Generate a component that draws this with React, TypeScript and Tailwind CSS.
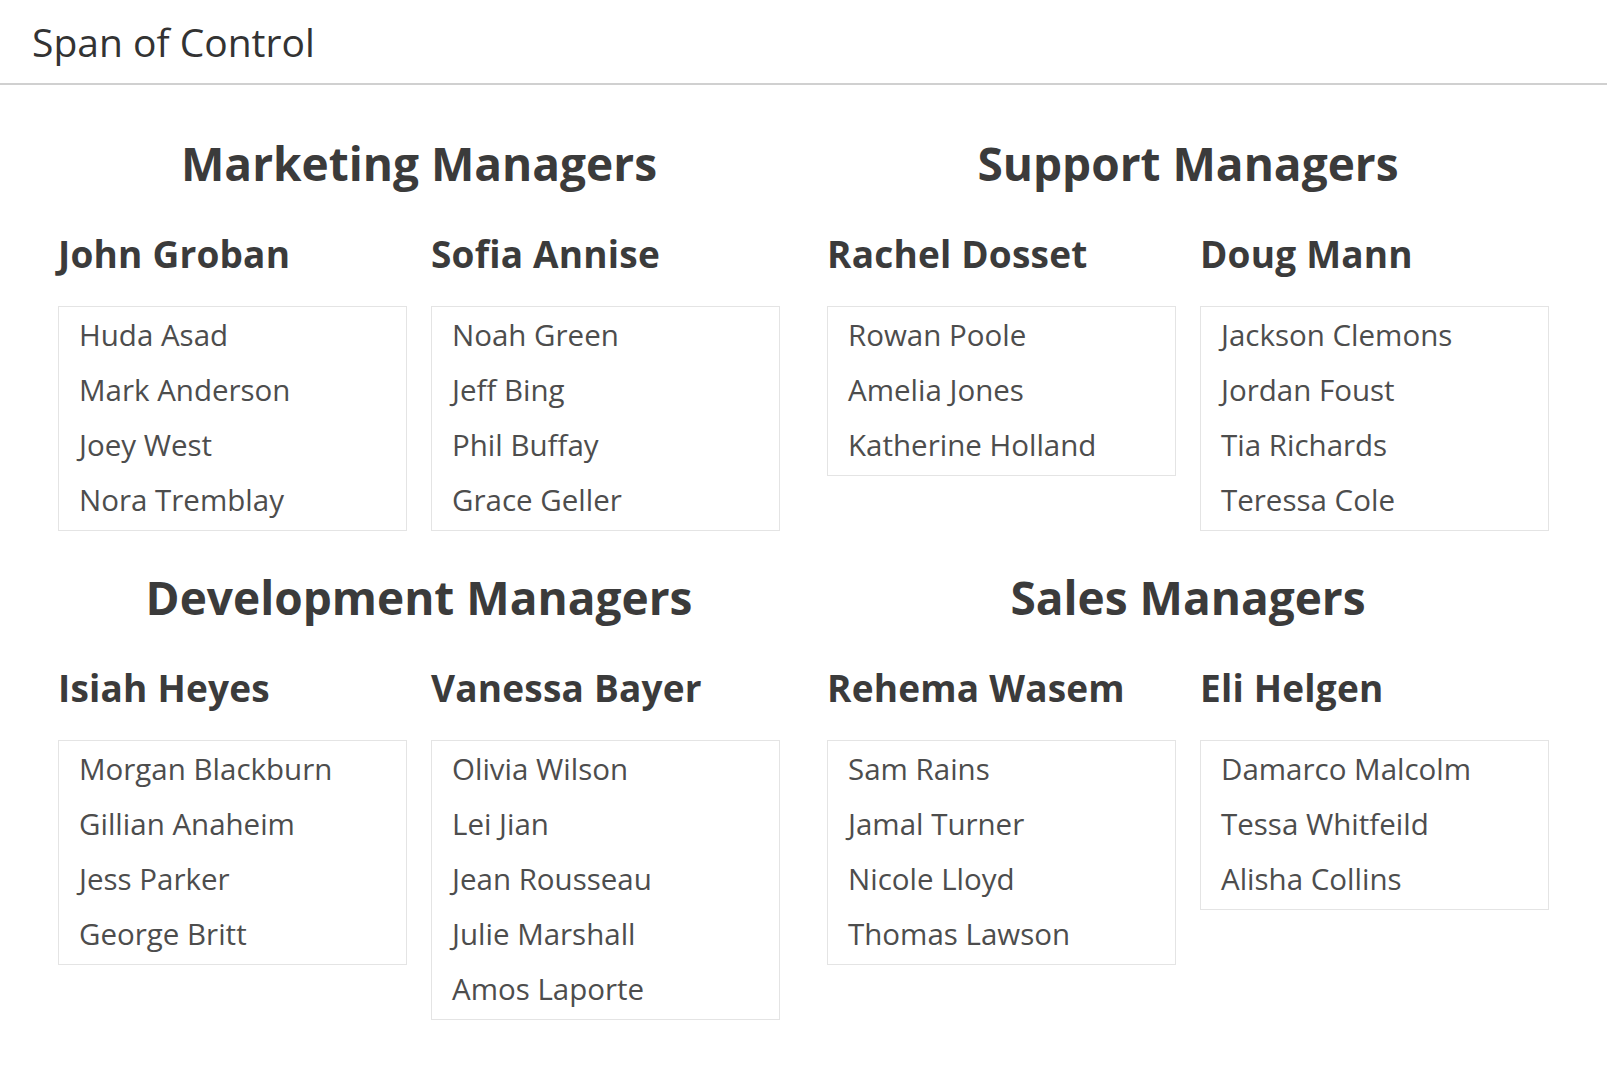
import React from "react";

type Manager = { name: string; reports: string[] };
type Section = { title: string; managers: Manager[] };

const sections: Section[] = [
  {
    title: "Marketing Managers",
    managers: [
      { name: "John Groban", reports: ["Huda Asad", "Mark Anderson", "Joey West", "Nora Tremblay"] },
      { name: "Sofia Annise", reports: ["Noah Green", "Jeff Bing", "Phil Buffay", "Grace Geller"] },
    ],
  },
  {
    title: "Support Managers",
    managers: [
      { name: "Rachel Dosset", reports: ["Rowan Poole", "Amelia Jones", "Katherine Holland"] },
      { name: "Doug Mann", reports: ["Jackson Clemons", "Jordan Foust", "Tia Richards", "Teressa Cole"] },
    ],
  },
  {
    title: "Development Managers",
    managers: [
      { name: "Isiah Heyes", reports: ["Morgan Blackburn", "Gillian Anaheim", "Jess Parker", "George Britt"] },
      {
        name: "Vanessa Bayer",
        reports: ["Olivia Wilson", "Lei Jian", "Jean Rousseau", "Julie Marshall", "Amos Laporte"],
      },
    ],
  },
  {
    title: "Sales Managers",
    managers: [
      { name: "Rehema Wasem", reports: ["Sam Rains", "Jamal Turner", "Nicole Lloyd", "Thomas Lawson"] },
      { name: "Eli Helgen", reports: ["Damarco Malcolm", "Tessa Whitfeild", "Alisha Collins"] },
    ],
  },
];

export default function App() {
  return (
    <div
      className="w-[1607px] h-[1080px] bg-white overflow-hidden"
      style={{ fontFamily: '"Open Sans", "Noto Sans", sans-serif' }}
    >
      <div className="h-[85px] border-b-2 border-[#d0d0d0] flex items-center pl-[32px]">
        <span className="text-[39px] leading-none text-[#333333]">Span of Control</span>
      </div>
      <div className="grid grid-cols-2 gap-x-[47px] gap-y-[36px] pl-[58px] pr-[58px] pt-[48px]">
        {sections.map((s) => (
          <div key={s.title} className="flex flex-col">
            <h2 className="text-center text-[46px] leading-[60px] font-bold text-[#3b3b3b]">{s.title}</h2>
            <div className="grid grid-cols-2 gap-x-[24px] mt-[39px] items-start">
              {s.managers.map((m) => (
                <div key={m.name} className="flex flex-col">
                  <h3 className="text-[37px] leading-[44px] font-bold text-[#3b3b3b] tracking-[0.2px]">{m.name}</h3>
                  <ul className="mt-[30px] border border-[#e4e4e4] pb-[3px]">
                    {m.reports.map((r) => (
                      <li key={r} className="h-[55px] leading-[55px] pl-5 text-[29.5px] text-[#4d4d4d]">
                        {r}
                      </li>
                    ))}
                  </ul>
                </div>
              ))}
            </div>
          </div>
        ))}
      </div>
    </div>
  );
}
